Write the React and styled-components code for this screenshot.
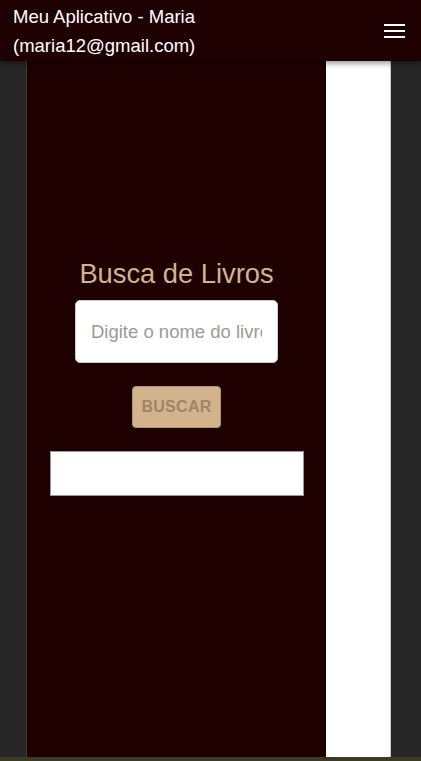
import React from "react";
import styled, { createGlobalStyle } from "styled-components";

const GlobalStyle = createGlobalStyle`
  body {
    margin: 0;
    background: #252625;
    font-family: "Liberation Sans", Arial, sans-serif;
  }
`;

const Page = styled.div`
  display: flex;
  flex-direction: column;
  height: 761px;
  overflow: hidden;
`;

const Header = styled.header`
  height: 61px;
  flex-shrink: 0;
  background: #1e0001;
  display: flex;
  align-items: center;
  justify-content: space-between;
  padding: 0 16px 0 13px;
  box-shadow: 0 2px 6px rgba(0, 0, 0, 0.45);
  position: relative;
  z-index: 2;
`;

const Title = styled.h1`
  margin: 0;
  color: #fff;
  font-size: 18.5px;
  font-weight: 400;
  line-height: 29px;
  width: 190px;
`;

const MenuBtn = styled.button`
  background: none;
  border: none;
  padding: 0;
  width: 21px;
  height: 14px;
  display: flex;
  flex-direction: column;
  justify-content: space-between;
  cursor: pointer;
`;

const MenuLine = styled.span`
  display: block;
  height: 2px;
  background: #fff;
`;

const Body = styled.main`
  flex: 1;
  display: flex;
  padding-left: 26px;
`;

const Column = styled.section`
  width: 299px;
  background: #1e0001;
  border-left: 1px solid #3c3c3c;
  display: flex;
  flex-direction: column;
  align-items: center;
  padding-top: 196px;
`;

const Side = styled.aside`
  width: 64px;
  background: #fff;
  border-right: 1px solid #c8c8c8;
`;

const Heading = styled.h2`
  margin: 0;
  color: #d2b48c;
  font-size: 27.3px;
  font-weight: 400;
  line-height: 33px;
`;

const SearchInput = styled.input`
  margin-top: 10px;
  width: 203px;
  height: 63px;
  box-sizing: border-box;
  border: 1px solid #ccc;
  border-radius: 5px;
  padding: 0 15px;
  font-family: inherit;
  font-size: 18.5px;
  &::placeholder {
    color: #9a9a9a;
  }
`;

const SearchBtn = styled.button`
  margin-top: 23px;
  width: 89px;
  height: 42px;
  background: #d2b48c;
  border: 1px solid #b8946c;
  border-radius: 4px;
  color: #a2826a;
  font-family: inherit;
  font-size: 16px;
  font-weight: 700;
  letter-spacing: 0.3px;
`;

const Results = styled.div`
  margin-top: 23px;
  width: 254px;
  height: 45px;
  box-sizing: border-box;
  background: #fff;
  border: 1px solid #999;
`;

const Footer = styled.footer`
  height: 4px;
  background: #3b3a24;
`;

export default function App() {
  return (
    <Page>
      <GlobalStyle />
      <Header>
        <Title>Meu Aplicativo - Maria (maria12@gmail.com)</Title>
        <MenuBtn aria-label="menu">
          <MenuLine />
          <MenuLine />
          <MenuLine />
        </MenuBtn>
      </Header>
      <Body>
        <Column>
          <Heading>Busca de Livros</Heading>
          <SearchInput placeholder="Digite o nome do livro" />
          <SearchBtn disabled>BUSCAR</SearchBtn>
          <Results />
        </Column>
        <Side />
      </Body>
      <Footer />
    </Page>
  );
}
